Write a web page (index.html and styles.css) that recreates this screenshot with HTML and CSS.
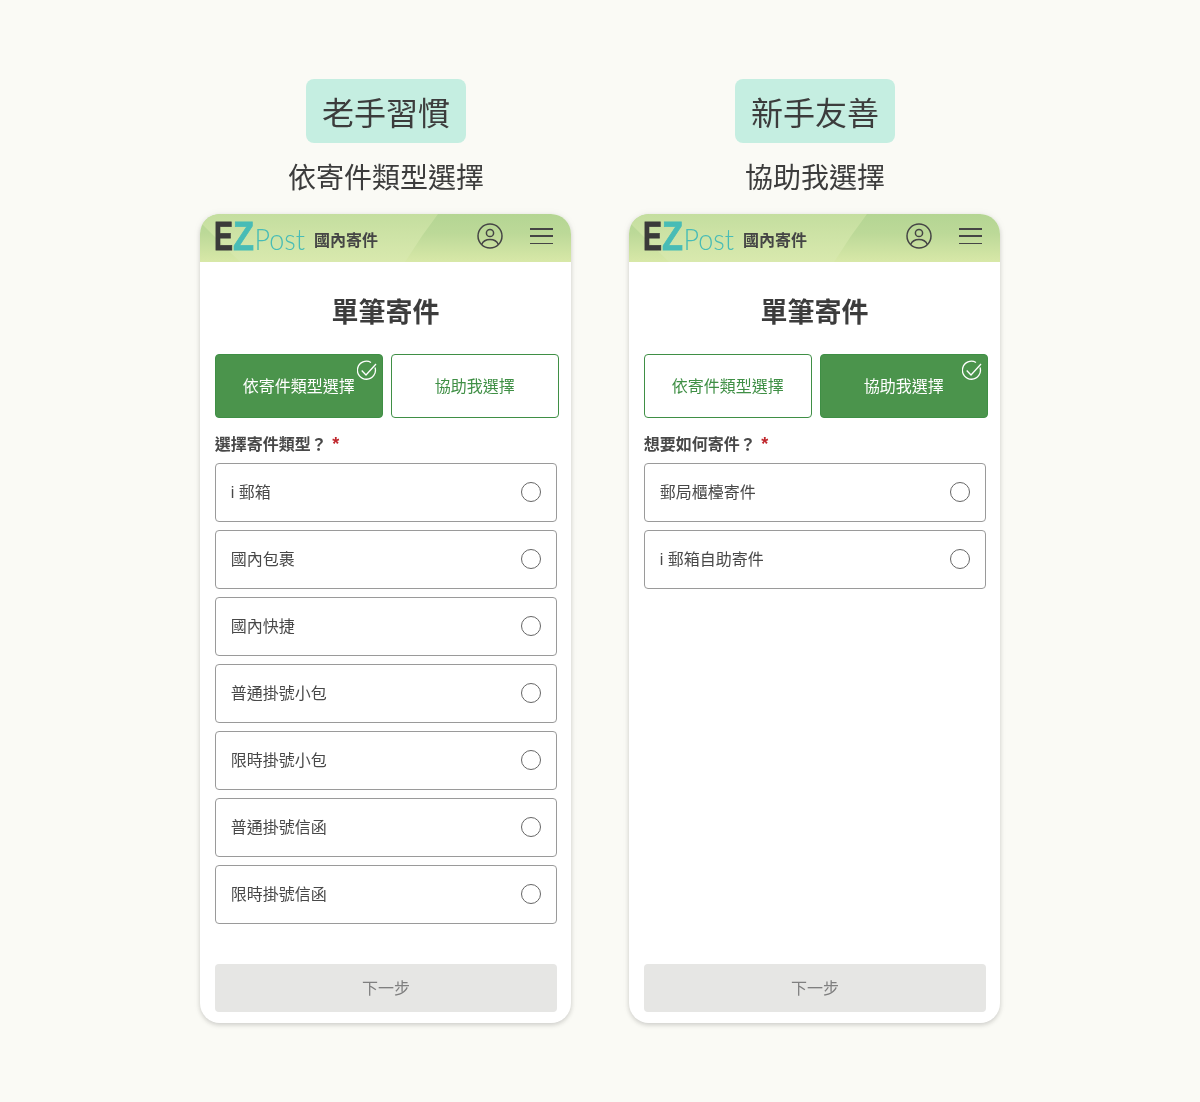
FILE: index.html
```html
<!DOCTYPE html>
<html lang="zh-Hant">
<head>
  <meta charset="UTF-8">
  <title>EZPost 單筆寄件</title>
  <meta name="viewport" content="width=device-width, initial-scale=1.0">
  <link rel="stylesheet" href="styles.css">
</head>
<body>

<div class="page">

  <section class="column">
    <div class="tag"><span>老手習慣</span></div>
    <div class="subtitle">依寄件類型選擇</div>
    <div class="phone">
      <header class="topbar">
        <svg class="logo" viewBox="0 0 100 48">
          <text class="logo-e" x="0" y="36" textLength="19" lengthAdjust="spacingAndGlyphs">E</text>
          <text class="logo-z" x="19" y="36" textLength="21" lengthAdjust="spacingAndGlyphs">Z</text>
          <text class="logo-post" x="40.500" y="36" textLength="50.500" lengthAdjust="spacingAndGlyphs">Post</text>
        </svg>
        <div class="logo-label">國內寄件</div>
        <svg class="user-icon" viewBox="0 0 26 26"><circle cx="13" cy="13" r="12" /><circle cx="13" cy="10" r="3.6" /><path d="M4.6 21.5c1.6-3.6 4.6-5 8.4-5s6.800 1.400 8.400 5" /></svg>
        <div class="menu-icon"><span></span><span></span><span></span></div>
      </header>
      <main class="content">
        <h1 class="title">單筆寄件</h1>
        <div class="toggle">
          <button class="toggle-btn active">依寄件類型選擇
            <svg class="check" viewBox="0 0 20 20"><path d="M18 7.500A9 9 0 1 1 14 2.500" /><path d="M4.700 10.500L9 15 19 4" /></svg>
          </button>
          <button class="toggle-btn">協助我選擇</button>
        </div>
        <div class="question">選擇寄件類型？ <span class="star">*</span></div>
        <div class="options">
          <div class="option"><span class="option-label">i 郵箱</span><span class="radio"></span></div>
          <div class="option"><span class="option-label">國內包裹</span><span class="radio"></span></div>
          <div class="option"><span class="option-label">國內快捷</span><span class="radio"></span></div>
          <div class="option"><span class="option-label">普通掛號小包</span><span class="radio"></span></div>
          <div class="option"><span class="option-label">限時掛號小包</span><span class="radio"></span></div>
          <div class="option"><span class="option-label">普通掛號信函</span><span class="radio"></span></div>
          <div class="option"><span class="option-label">限時掛號信函</span><span class="radio"></span></div>
        </div>
        <button class="next">下一步</button>
      </main>
    </div>
  </section>

  <section class="column">
    <div class="tag"><span>新手友善</span></div>
    <div class="subtitle">協助我選擇</div>
    <div class="phone">
      <header class="topbar">
        <svg class="logo" viewBox="0 0 100 48">
          <text class="logo-e" x="0" y="36" textLength="19" lengthAdjust="spacingAndGlyphs">E</text>
          <text class="logo-z" x="19" y="36" textLength="21" lengthAdjust="spacingAndGlyphs">Z</text>
          <text class="logo-post" x="40.500" y="36" textLength="50.500" lengthAdjust="spacingAndGlyphs">Post</text>
        </svg>
        <div class="logo-label">國內寄件</div>
        <svg class="user-icon" viewBox="0 0 26 26"><circle cx="13" cy="13" r="12" /><circle cx="13" cy="10" r="3.6" /><path d="M4.6 21.5c1.6-3.6 4.6-5 8.4-5s6.800 1.400 8.400 5" /></svg>
        <div class="menu-icon"><span></span><span></span><span></span></div>
      </header>
      <main class="content">
        <h1 class="title">單筆寄件</h1>
        <div class="toggle">
          <button class="toggle-btn">依寄件類型選擇</button>
          <button class="toggle-btn active">協助我選擇
            <svg class="check" viewBox="0 0 20 20"><path d="M18 7.500A9 9 0 1 1 14 2.500" /><path d="M4.700 10.500L9 15 19 4" /></svg>
          </button>
        </div>
        <div class="question">想要如何寄件？ <span class="star">*</span></div>
        <div class="options">
          <div class="option"><span class="option-label">郵局櫃檯寄件</span><span class="radio"></span></div>
          <div class="option"><span class="option-label">i 郵箱自助寄件</span><span class="radio"></span></div>
        </div>
        <button class="next">下一步</button>
      </main>
    </div>
  </section>

</div>

</body>
</html>
```

FILE: styles.css
```css
* { margin: 0; padding: 0; box-sizing: border-box; }
body { background-color: #fafaf5; font-family: "Liberation Sans", "Noto Sans CJK TC", sans-serif; color: #3c3c3c; }
.page { display: flex; justify-content: center; gap: 58px; padding-top: 79px; height: 1102px; will-change: transform; }
.column { width: 371px; display: flex; flex-direction: column; align-items: center; }

.tag { width: 160px; height: 64px; margin-left: 1px; border-radius: 8px; background-color: #c5eee1; font-size: 32px; line-height: 70px; text-align: center; }
.subtitle { font-size: 28px; line-height: 40px; margin-left: 1px; margin-top: 16px; margin-bottom: 15px; }

.phone {
  width: 371px;
  height: 809px;
  border-radius: 20px;
  background-color: #fff;
  box-shadow: 0 2px 5px rgba(0,0,0,0.16), 0 0 8px rgba(0,0,0,0.05);
  overflow: hidden;
  display: flex;
  flex-direction: column;
}

.topbar {
  position: relative;
  height: 48px;
  flex: none;
  display: flex;
  align-items: center;
  padding-left: 14px;
  background: linear-gradient(180deg, #b4d593 0%, #bcd998 40%, #d8e8a8 100%);
  overflow: hidden;
}
.topbar::before {
  content: "";
  position: absolute;
  top: 0;
  left: 0;
  width: 240px;
  height: 48px;
  background: linear-gradient(180deg, #c4de9f 0%, #d9e9ae 100%);
  clip-path: polygon(0 0, 238px 0, 222px 22px, 205px 48px, 40px 48px, 0 8px);
}
.logo { position: relative; width: 100px; height: 48px; flex: none; }
.logo-e { font-family: "Liberation Sans", sans-serif; font-size: 40px; font-weight: 700; fill: #3a3a3a; stroke: #3a3a3a; stroke-width: 0.8; }
.logo-z { font-family: "Liberation Sans", sans-serif; font-size: 40px; font-weight: 700; fill: #48bcb6; stroke: #48bcb6; stroke-width: 0.8; }
.logo-post { font-family: Lato, sans-serif; font-size: 30px; font-weight: 300; fill: #48bcb6; }
.logo-label { position: relative; font-size: 16px; font-weight: 700; color: #454545; margin-top: 1px; }
.user-icon { position: absolute; top: 9px; left: 277px; width: 26px; height: 26px; fill: none; stroke: #454545; stroke-width: 1.5; }
.menu-icon { position: absolute; top: 14px; left: 330px; width: 23px; height: 16px; display: flex; flex-direction: column; justify-content: space-between; }
.menu-icon span { display: block; height: 1.5px; background-color: #454545; }

.content { flex: 1; display: flex; flex-direction: column; padding: 0 0 11px 14.7px; }
.title { font-size: 27px; font-weight: 700; line-height: 36px; text-align: center; margin-top: 33px; margin-bottom: 23px; padding-right: 14.7px; }

.toggle { display: flex; gap: 8px; }
.toggle-btn {
  position: relative;
  flex: none;
  width: 168px;
  height: 64px;
  padding-bottom: 2px;
  border: 1px solid #3f8f45;
  border-radius: 4px;
  background-color: #fff;
  color: #3f8f45;
  font-family: inherit;
  font-size: 16px;
}
.toggle-btn.active { background-color: #4b944c; color: #fff; }
.check { position: absolute; top: 5px; right: 5px; width: 20px; height: 20px; fill: none; stroke: #fff; stroke-width: 1.3; }

.question { font-size: 16px; font-weight: 700; line-height: 24px; height: 24px; margin-top: 15px; margin-bottom: 6px; color: #484848; }
.star { color: #c0272d; font-size: 18px; line-height: 1; margin-left: 1px; }

.options { display: flex; flex-direction: column; gap: 8px; width: 342.6px; }
.option {
  height: 59px;
  display: flex;
  align-items: center;
  justify-content: space-between;
  padding: 0 15px;
  border: 1px solid #9a9a9a;
  border-radius: 4px;
  font-size: 16px;
  color: #484848;
}
.option-label { margin-bottom: 4px; }
.radio { width: 20px; height: 20px; margin-bottom: 1px; border: 1px solid #666; border-radius: 50%; }

.next {
  width: 342.6px;
  height: 48px;
  margin-top: auto;
  padding-bottom: 2px;
  border: none;
  border-radius: 4px;
  background-color: #e6e6e4;
  color: #7f7f7f;
  font-family: inherit;
  font-size: 16px;
}
```
